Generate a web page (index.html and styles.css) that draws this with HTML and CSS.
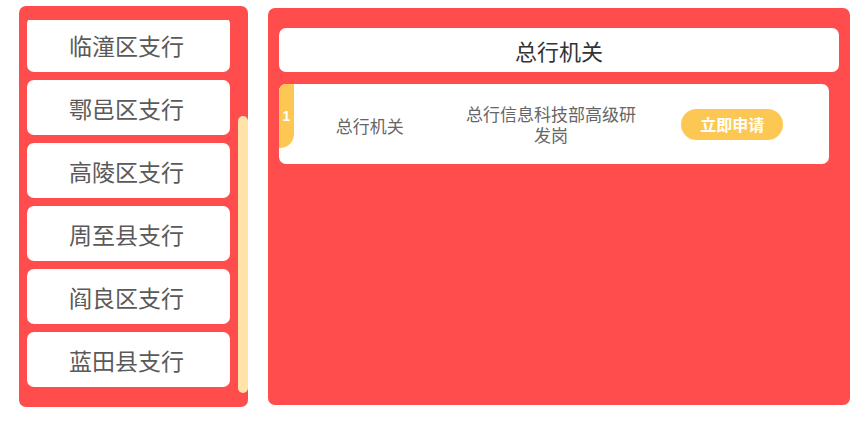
FILE: index.html
```html
<!DOCTYPE html>
<html lang="zh-CN">
<head>
    <meta charset="UTF-8">
    <meta name="viewport" content="width=device-width, initial-scale=1.0">
    <title>岗位申请</title>
    <link rel="stylesheet" href="styles.css">
</head>
<body>

    <div class="page">
        <!-- Branch list on the left -->
        <div class="side-panel">
            <div class="branch-list" id="branch-list">
                <div class="branch-item">灞桥区支行</div>
                <div class="branch-item">长安区支行</div>
                <div class="branch-item">临潼区支行</div>
                <div class="branch-item">鄠邑区支行</div>
                <div class="branch-item">高陵区支行</div>
                <div class="branch-item">周至县支行</div>
                <div class="branch-item">阎良区支行</div>
                <div class="branch-item">蓝田县支行</div>
            </div>
            <!-- custom scrollbar thumb -->
            <div class="scroll-thumb"></div>
        </div>

        <!-- Job list on the right -->
        <div class="main-panel">
            <div class="main-title">总行机关</div>
            <div class="job-card">
                <span class="job-index">1</span>
                <div class="job-dept">总行机关</div>
                <div class="job-name">总行信息科技部高级研发岗</div>
                <div class="job-action">
                    <button class="apply-btn">立即申请</button>
                </div>
            </div>
        </div>
    </div>

    <script src="main.js"></script>
</body>
</html>
```

FILE: styles.css
```css
body {
    margin: 0;
    font-family: "Noto Sans CJK SC", "Noto Sans", sans-serif;
    background-color: #fff;
}

.page {
    display: flex;
    align-items: flex-start;
    padding-left: 19px;
}

/* Left side: branches */
.side-panel {
    position: relative;
    width: 229px;
    height: 387px;
    margin-top: 6px;
    padding-top: 14px;
    background-color: #ff4d4d;
    border-radius: 7px;
}

.branch-list {
    height: 373px;
    overflow-y: auto;
    scrollbar-width: none;
    padding: 0 18px 0 8px;
    display: flex;
    flex-direction: column;
    gap: 8px;
}

.scroll-thumb {
    position: absolute;
    top: 110px;
    left: 219px;
    width: 10px;
    height: 277px;
    background-color: #ffe3a8;
    border-radius: 5px;
}

.branch-item {
    flex: 0 0 55px;
    display: flex;
    justify-content: center;
    align-items: center;
    padding-right: 4px;
    background-color: #fff;
    border-radius: 7px;
    font-size: 23px;
    color: #5a5a5a;
}

.branch-item:last-child {
    margin-bottom: 6px;
}

/* Right side: jobs */
.main-panel {
    width: 560px;
    height: 377px;
    margin-top: 8px;
    margin-left: 20px;
    padding: 20px 11px 0;
    background-color: #ff4d4d;
    border-radius: 7px;
}

.main-title {
    height: 44px;
    display: flex;
    justify-content: center;
    align-items: center;
    background-color: #fff;
    border-radius: 7px;
    font-size: 22px;
    color: #333;
}

.job-card {
    position: relative;
    display: grid;
    grid-template-columns: repeat(3, 1fr);
    align-items: center;
    height: 80px;
    margin-top: 12px;
    margin-right: 10px;
    padding-right: 6px;
    background-color: #fff;
    border-radius: 7px;
    color: #666;
    font-size: 17px;
}

.job-index {
    position: absolute;
    top: 0;
    left: 0;
    width: 15px;
    height: 64px;
    display: flex;
    justify-content: center;
    align-items: center;
    background-color: #fcc853;
    border-radius: 7px 0 14px 0;
    color: #fff;
    font-family: "Liberation Sans", Arial, sans-serif;
    font-size: 14px;
    font-weight: bold;
}

.job-dept {
    text-align: center;
    padding-top: 2px;
}

.job-name {
    text-align: center;
    line-height: 21px;
    padding: 0 5px;
}

.job-action {
    display: flex;
    justify-content: center;
}

.apply-btn {
    width: 102px;
    height: 31px;
    border: none;
    border-radius: 16px;
    background-color: #fcc853;
    color: #fff;
    font-family: inherit;
    font-size: 16px;
    font-weight: 600;
    cursor: pointer;
}
```

FILE: main.js
```js
// keep the branch list scrolled to the bottom
const branchList = document.getElementById("branch-list");
branchList.scrollTop = branchList.scrollHeight;
```
